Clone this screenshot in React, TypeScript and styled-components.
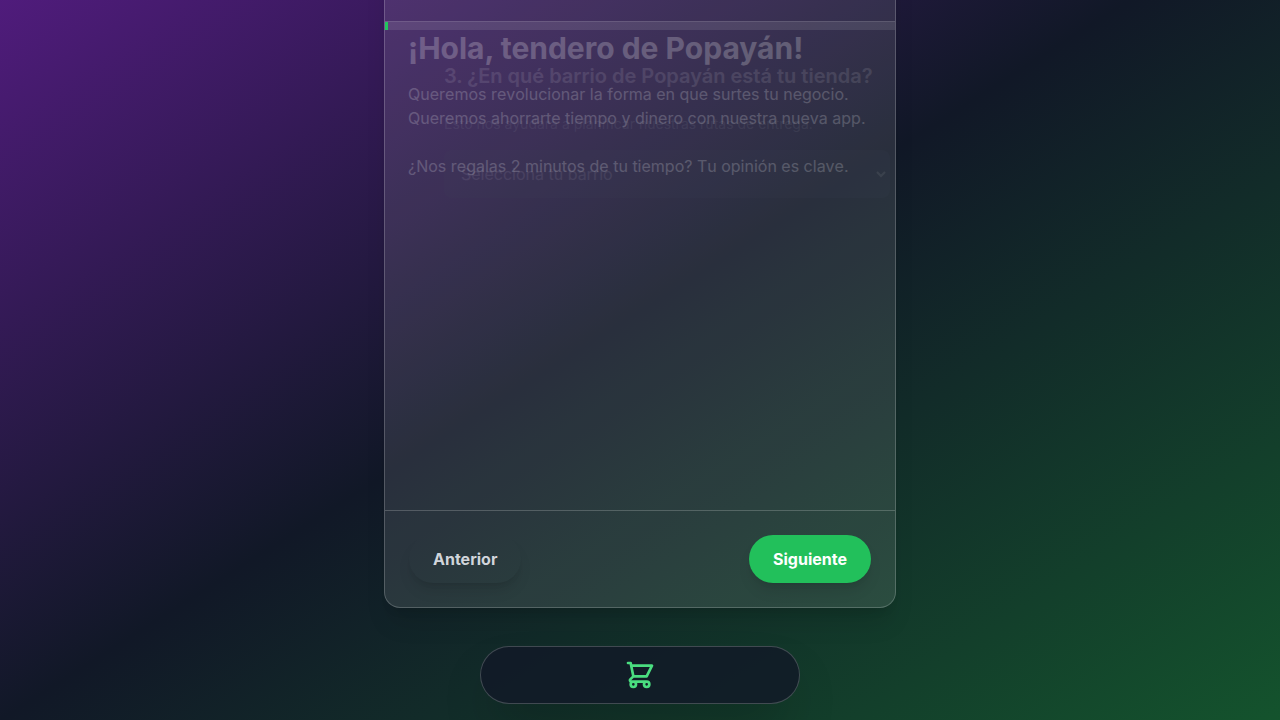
import React from "react";
import styled, { createGlobalStyle, css } from "styled-components";

const GlobalStyle = createGlobalStyle`
  *, *::before, *::after { box-sizing: border-box; }
  body {
    margin: 0;
    background: #111827;
    color: #fff;
    font-family: Inter, "Liberation Sans", sans-serif;
    font-size: 16px;
    line-height: 24px;
  }
  h1, h2, p { margin: 0; }
`;

const Page = styled.div`
  height: 100vh;
  overflow: hidden;
  display: flex;
  flex-direction: column;
  align-items: center;
  justify-content: flex-end;
  gap: 38px;
  padding-bottom: 16px;
  background: linear-gradient(to bottom right, #581c87, #111827, #14532d) bottom / 100% calc(100% + 96px) no-repeat;
`;

const Card = styled.main`
  flex: none;
  width: 100%;
  max-width: 512px;
  display: flex;
  flex-direction: column;
  overflow: hidden;
  border: 1px solid rgba(255, 255, 255, 0.2);
  border-radius: 16px;
  background: rgba(255, 255, 255, 0.1);
  box-shadow: 0 20px 25px -5px rgba(0, 0, 0, 0.1), 0 8px 10px -6px rgba(0, 0, 0, 0.1);
`;

const CardHeader = styled.header`
  height: 101px;
  border-bottom: 1px solid rgba(255, 255, 255, 0.2);
`;

const ProgressTrack = styled.div`
  height: 8px;
  background: rgba(255, 255, 255, 0.1);
`;

const ProgressFill = styled.div`
  height: 100%;
  background: #22c55e;
`;

const Slides = styled.div`
  display: grid;
  height: 480px;
`;

const Slide = styled.section<{ $entering?: boolean }>`
  grid-area: 1 / 1;
  padding: 0 23px;
  opacity: 0.22;
  ${(p) =>
    p.$entering &&
    css`
      padding: 32px 5px 0 59px;
      opacity: 0.1;
    `}
`;

const Title = styled.h1`
  margin-bottom: 16px;
  font-size: 30px;
  line-height: 36px;
  font-weight: 700;
`;

const Intro = styled.p`
  color: #e5e7eb;
  font-kerning: none;
  white-space: pre-line;
`;

const Question = styled.label`
  display: block;
  margin-bottom: 24px;
  font-size: 20px;
  line-height: 28px;
  font-weight: 600;
`;

const Hint = styled.p`
  margin-bottom: 16px;
  font-size: 14px;
  line-height: 20px;
  color: #9ca3af;
`;

const Select = styled.select`
  display: block;
  width: 100%;
  height: 48px;
  padding: 0 12px;
  border: 1px solid transparent;
  border-radius: 8px;
  background-color: #414b5a;
  color: #d1d5db;
  font: inherit;
`;

const CardFooter = styled.footer`
  display: flex;
  justify-content: space-between;
  padding: 24px;
  border-top: 1px solid rgba(255, 255, 255, 0.2);
`;

const NavButton = styled.button<{ $primary?: boolean }>`
  padding: 12px 24px;
  border: 0;
  border-radius: 24px;
  background: ${(p) => (p.$primary ? "#22c05b" : "transparent")};
  color: ${(p) => (p.$primary ? "#fff" : "#d1d5db")};
  font: inherit;
  font-weight: 700;
  box-shadow: 0 10px 15px -3px rgba(0, 0, 0, 0.1), 0 4px 6px -4px rgba(0, 0, 0, 0.1);
  cursor: pointer;
`;

const Dock = styled.nav`
  flex: none;
  width: 100%;
  max-width: 320px;
  display: flex;
  justify-content: center;
  padding: 12px;
  border: 1px solid rgba(255, 255, 255, 0.2);
  border-radius: 29px;
  background: rgba(17, 24, 39, 0.8);
  box-shadow: 0 25px 50px -12px rgba(0, 0, 0, 0.25);
`;

const DockLink = styled.a`
  display: flex;
  color: #4ade80;
`;

function CartIcon() {
  return (
    <svg
      width="32"
      height="32"
      viewBox="0 0 24 24"
      fill="none"
      stroke="currentColor"
      strokeWidth="2"
      strokeLinecap="round"
      strokeLinejoin="round"
      aria-hidden="true"
    >
      <path d="M3 3h2l.4 2M7 13h10l4-8H5.4M7 13L5.4 5M7 13l-2.293 2.293c-.63.63-.184 1.707.707 1.707H17m0 0a2 2 0 100 4 2 2 0 000-4zm-8 2a2 2 0 11-4 0 2 2 0 014 0z" />
    </svg>
  );
}

const progress = 0.5;

export default function App() {
  return (
    <>
      <GlobalStyle />
      <Page>
        <Card>
          <CardHeader />
          <ProgressTrack>
            <ProgressFill style={{ width: `${progress}%` }} />
          </ProgressTrack>
          <Slides>
            <Slide $entering>
              <Question htmlFor="barrio">3. ¿En qué barrio de Popayán está tu tienda?</Question>
              <Hint>Esto nos ayudará a planificar nuestras rutas de entrega.</Hint>
              <Select id="barrio" defaultValue="">
                <option value="">Selecciona tu barrio</option>
              </Select>
            </Slide>
            <Slide>
              <Title>¡Hola, tendero de Popayán!</Title>
              <Intro>
                {"Queremos revolucionar la forma en que surtes tu negocio. Queremos ahorrarte tiempo y dinero con nuestra nueva app.\n\n¿Nos regalas 2 minutos de tu tiempo? Tu opinión es clave."}
              </Intro>
            </Slide>
          </Slides>
          <CardFooter>
            <NavButton type="button">Anterior</NavButton>
            <NavButton type="button" $primary>
              Siguiente
            </NavButton>
          </CardFooter>
        </Card>
        <Dock>
          <DockLink href="#tienda" aria-label="Tienda">
            <CartIcon />
          </DockLink>
        </Dock>
      </Page>
    </>
  );
}
